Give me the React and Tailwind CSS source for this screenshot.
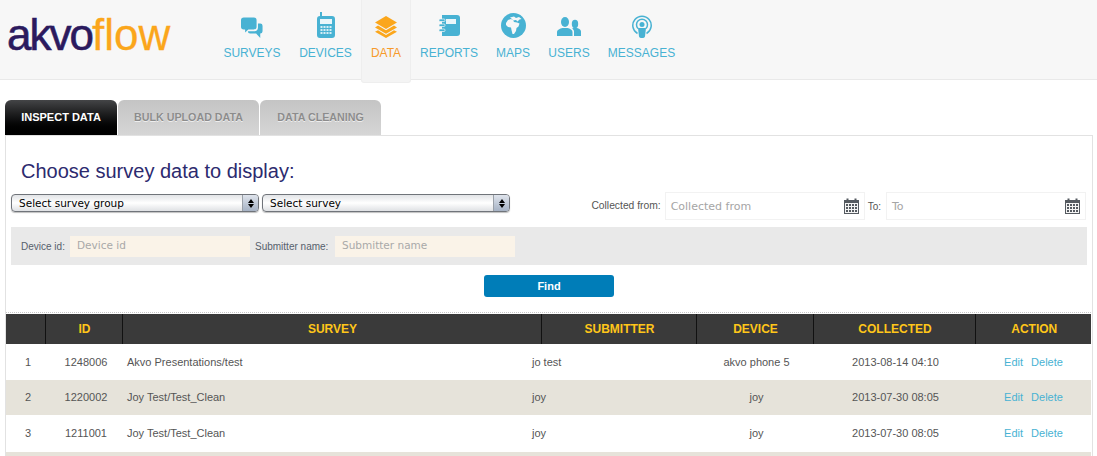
const Chat = () => (
  <svg width="22" height="24" viewBox="0 0 24 25" fill="#48b2d3">
    <path d="M3 1h11a3 3 0 0 1 3 3v7a3 3 0 0 1-3 3H8l-3.500 3.500V14H3a3 3 0 0 1-3-3V4a3 3 0 0 1 3-3z" />
    <path d="M18.500 7.500H21a2.500 2.500 0 0 1 2.500 2.500v6a2.500 2.500 0 0 1-2.500 2.500v5l-4.500-5H10a2.500 2.500 0 0 1-2.500-2.500h7a4 4 0 0 0 4-4z" />
  </svg>
);

const Device = () => (
  <svg width="18" height="26" viewBox="0 0 18 26">
    <path fill="#48b2d3" d="M3 0h2v4h10a3 3 0 0 1 3 3v16a3 3 0 0 1-3 3H3a3 3 0 0 1-3-3V7a3 3 0 0 1 3-3V0z" />
    <rect x="3" y="7" width="12" height="5" fill="#eaf6fa" />
    {[14, 17, 20].map((y) =>
      [3.500, 6.500, 9.500, 12.500].map((x) => (
        <rect key={`${x}-${y}`} x={x} y={y} width="2" height="2" fill="#d5edf5" />
      ))
    )}
  </svg>
);

const Layers = () => (
  <svg width="22" height="22" viewBox="0 0 22 22" fill="#fba61b">
    <path d="M11 0l11 6.500L11 13 0 6.500z" />
    <path d="M3 9.500l8 4.700 8-4.700 3 2-11 6.300L0 11.500z" />
    <path d="M3 14.200l8 4.700 8-4.700 3 1.600L11 22 0 15.800z" />
  </svg>
);

const Notebook = () => (
  <svg width="21" height="21" viewBox="0 0 21 21">
    <path fill="#48b2d3" d="M3 0h15a3 3 0 0 1 3 3v15a3 3 0 0 1-3 3H3z" />
    <rect x="7" y="4" width="10" height="5" fill="#eaf6fa" />
    <rect x="0" y="4" width="6" height="2.500" rx="1" fill="#48b2d3" stroke="#f7f7f7" strokeWidth="0.700" />
    <rect x="0" y="9" width="6" height="2.500" rx="1" fill="#48b2d3" stroke="#f7f7f7" strokeWidth="0.700" />
    <rect x="0" y="14" width="6" height="2.500" rx="1" fill="#48b2d3" stroke="#f7f7f7" strokeWidth="0.700" />
  </svg>
);

const Globe = () => (
  <svg width="25" height="25" viewBox="0 0 25 25">
    <circle cx="12.500" cy="12.500" r="12.500" fill="#48b2d3" />
    <path fill="#f7f7f7" d="M5 10l2-3 3-1 2 1 1 2 3 .5 2.500 1-1 3-2 1.500-.5 3-2 3h-1.500l-1-4-.5-2.500-3-.5L5 12z" />
    <path fill="#f7f7f7" d="M9 4.500l4-1 2 1.500 3-1 2.500 2-2 .5-2 2-1.500-1.500-3 .5-1-1.500z" />
  </svg>
);

const Users = () => (
  <svg width="24" height="20" viewBox="0 0 24 20" fill="#48b2d3">
    <ellipse cx="8" cy="5" rx="4" ry="5" />
    <path d="M0 19v-4c0-2 3-3.500 5.500-4h5c2.500.5 5 2 5 4v4z" />
    <ellipse cx="18" cy="7" rx="3.200" ry="4.200" />
    <path d="M17 19v-4.500c0-1.500-1-2.500-2-3l1.500-.5h3.500c2 .5 4 1.500 4 3.500V19z" />
  </svg>
);

const Podcast = () => (
  <svg width="20" height="23" viewBox="0 0 20 23" fill="none" stroke="#48b2d3">
    <path strokeWidth="1.500" d="M5.500 18.500a9.200 9.200 0 1 1 9 0" />
    <path strokeWidth="1.500" d="M6 13.500a5.500 5.500 0 1 1 8 0" />
    <circle cx="10" cy="9.500" r="2.500" fill="#48b2d3" stroke="none" />
    <path fill="#48b2d3" stroke="none" d="M6 13h8l-1 8.500a2 2 0 0 1-2 1.500H9a2 2 0 0 1-2-1.500z" />
  </svg>
);

const Calendar = () => (
  <svg width="15" height="16" viewBox="0 0 15 16" fill="#555a60" className="shrink-0">
    <path d="M0 2h2.500V0.500h2V2h6V0.500h2V2H15v14H0z" />
    <rect x="1" y="5" width="13" height="10" fill="#f4f4f4" />
    {[6, 9, 12].map((y) =>
      [2, 5, 8, 11].map((x) => (
        <rect key={`${x}-${y}`} x={x} y={y} width="2" height="2" />
      ))
    )}
  </svg>
);

const navItems = [
  { label: "SURVEYS", icon: <Chat />, cls: "w-[76px]", iconCls: "pt-[6px]" },
  { label: "DEVICES", icon: <Device />, cls: "w-[71px]", iconCls: "" },
  { label: "DATA", icon: <Layers />, active: true, cls: "w-[50px]", iconCls: "pt-[3px]" },
  { label: "REPORTS", icon: <Notebook />, cls: "w-[76px]", iconCls: "" },
  { label: "MAPS", icon: <Globe />, cls: "w-[52px]", iconCls: "" },
  { label: "USERS", icon: <Users />, cls: "w-[60px]", iconCls: "pt-[3px]" },
  { label: "MESSAGES", icon: <Podcast />, cls: "w-[85px]", iconCls: "pt-[3px]" },
];

const rows = [
  { n: 1, id: "1248006", survey: "Akvo Presentations/test", submitter: "jo test", device: "akvo phone 5", date: "2013-08-14 04:10", h: "h-[36px]", bg: "bg-white" },
  { n: 2, id: "1220002", survey: "Joy Test/Test_Clean", submitter: "joy", device: "joy", date: "2013-07-30 08:05", h: "h-[35px]", bg: "bg-[#e6e3da]" },
  { n: 3, id: "1211001", survey: "Joy Test/Test_Clean", submitter: "joy", device: "joy", date: "2013-07-30 08:05", h: "h-[37px]", bg: "bg-white" },
];

const columns = [
  { label: "", w: "w-[39px]" },
  { label: "ID", w: "w-[77px]" },
  { label: "SURVEY", w: "w-[419px]" },
  { label: "SUBMITTER", w: "w-[155px]" },
  { label: "DEVICE", w: "w-[117px]" },
  { label: "COLLECTED", w: "w-[162px]" },
  { label: "ACTION", w: "" },
];

const SelectBox = ({ label }) => (
  <div className="w-[248px] h-[18px] flex items-center rounded-[4px] border border-[#70747a] bg-gradient-to-b from-[#e2e4e7] via-[#ffffff] to-[#dfe1e4] overflow-hidden shadow-[0_1px_1px_rgba(0,0,0,0.25)]">
    <span className="flex-1 pl-[7px] pt-[1px] font-['DejaVu_Sans',sans-serif] text-[10.500px] text-black">{label}</span>
    <span className="w-[16px] h-full flex flex-col items-center justify-center gap-[1px] bg-gradient-to-b from-[#dfe4ec] to-[#a6b2c4] border-l border-[#9aa0a8]">
      <span className="w-0 h-0 border-x-[3px] border-x-transparent border-b-[4px] border-b-black" />
      <span className="w-0 h-0 border-x-[3px] border-x-transparent border-t-[4px] border-t-black" />
    </span>
  </div>
);

const DateInput = ({ label }) => (
  <div className="w-[200px] h-[28px] flex items-center justify-between pl-[5px] pr-[5px] border border-[#f2f2f2] font-['DejaVu_Sans',sans-serif] text-[11px] text-[#a5a5a5]">
    <span className="mt-[3px]">{label}</span>
    <Calendar />
  </div>
);

const App = () => {
  return (
    <div className="w-[1097px] h-[456px] overflow-hidden bg-white font-['Liberation_Sans',sans-serif]">
      {/* Header */}
      <header className="h-[80px] flex bg-[#f7f7f7] border-b border-[#e9e9e9]">
        <div className="w-[214px] pl-[7px] pt-[7px] text-[44px] leading-[56px]">
          <span className="text-[#2b1a5e] tracking-[-2px] [-webkit-text-stroke:0.6px_#2b1a5e]">akvo</span>
          <span className="text-[#fba61b] [-webkit-text-stroke:0.3px_#fba61b]">flow</span>
        </div>
        <nav className="flex items-start">
          {navItems.map((item) => (
            <div
              key={item.label}
              className={`${item.cls} flex flex-col items-center ${
                item.active
                  ? "h-[83px] bg-[#f4f4f4] border-x border-b border-[#eeeeee] rounded-b-[3px] relative"
                  : "h-[79px]"
              }`}
            >
              <div className={`h-[26px] mt-[12px] flex items-center justify-center ${item.iconCls}`}>{item.icon}</div>
              <span className={`mt-[8px] text-[12px] leading-[14px] ${item.active ? "text-[#f79a2a]" : "text-[#48b2d3]"}`}>
                {item.label}
              </span>
            </div>
          ))}
        </nav>
      </header>

      {/* Tabs */}
      <div className="mt-[20px] ml-[5px] flex gap-[1px] h-[35px]">
        <div className="w-[112px] flex items-center justify-center rounded-t-[6px] bg-gradient-to-b from-[#444547] to-[#000000] text-[11px] font-bold text-white">
          INSPECT DATA
        </div>
        <div className="w-[141px] flex items-center justify-center rounded-t-[6px] bg-gradient-to-b from-[#c4c4c4] to-[#d6d6d6] text-[10.700px] font-bold text-[#8c8c8c] [text-shadow:0_1px_0_#eeeeee]">
          BULK UPLOAD DATA
        </div>
        <div className="w-[121px] flex items-center justify-center rounded-t-[6px] bg-gradient-to-b from-[#c4c4c4] to-[#d6d6d6] text-[10.700px] font-bold text-[#8c8c8c] [text-shadow:0_1px_0_#eeeeee]">
          DATA CLEANING
        </div>
      </div>

      {/* Panel */}
      <main className="ml-[5px] w-[1088px] h-[321px] border-l border-t border-r border-[#e2e2e2]">
        <h1 className="pl-[15px] pt-[23px] text-[20px] leading-[24px] text-[#2c2a6e]">Choose survey data to display:</h1>

        <div className="pl-[5px] pr-[6px] mt-[9px] h-[28px] flex items-start">
          <div className="flex gap-[3px] mt-[2px]">
            <SelectBox label="Select survey group" />
            <SelectBox label="Select survey" />
          </div>
          <div className="ml-auto flex items-center h-[28px]">
            <span className="text-[10.300px] text-[#555555] mr-[4px]">Collected from:</span>
            <DateInput label="Collected from" />
            <span className="ml-[3px] mr-[5px] text-[10px] text-[#555555]">To:</span>
            <DateInput label="To" />
          </div>
        </div>

        <div className="mx-[5px] mt-[7px] h-[38px] bg-[#e9e9e9] flex items-center pl-[10px] text-[10px] text-[#56606c]">
          <span className="w-[49px]">Device id:</span>
          <div className="w-[180px] h-[21px] flex items-center pl-[7px] bg-[#faf3e8] font-['DejaVu_Sans',sans-serif] text-[10.500px] text-[#a9a9a9]">Device id</div>
          <span className="ml-[5px] w-[80px]">Submitter name:</span>
          <div className="w-[180px] h-[21px] flex items-center pl-[7px] bg-[#faf3e8] font-['DejaVu_Sans',sans-serif] text-[10.500px] text-[#a9a9a9]">Submitter name</div>
        </div>

        <div className="mt-[10px] flex justify-center">
          <button className="w-[130px] h-[22px] rounded-[3px] bg-[#007db8] text-[11px] font-bold text-white">Find</button>
        </div>

        <div className="mt-[15px] w-[1085px] border-t border-dotted border-[#c8c8c8]" />

        {/* Table */}
        <table className="mt-[1px] w-[1085px] table-fixed border-collapse text-[11px] text-[#555555]">
          <thead>
            <tr className="h-[30px] bg-[#3a3a3a]">
              {columns.map((col, i) => (
                <th
                  key={i}
                  className={`${col.w} p-0 pl-[2px] text-center text-[12px] font-bold text-[#ffc619] ${i < 6 ? "border-r border-[#111111]" : ""}`}
                >
                  {col.label}
                </th>
              ))}
            </tr>
          </thead>
          <tbody>
            {rows.map((row) => (
              <tr key={row.n} className={`${row.h} ${row.bg}`}>
                <td className="p-0 pl-[5px] text-center">{row.n}</td>
                <td className="p-0 pl-[5px] text-center">{row.id}</td>
                <td className="p-0 pl-[5px]">{row.survey}</td>
                <td className="p-0">
                  {/* submitter text sits left of its header column in the original */}
                  <span className="block -ml-[9px]">{row.submitter}</span>
                </td>
                <td className="p-0 pl-[4px] text-center">{row.device}</td>
                <td className="p-0 pl-[3px] text-center">{row.date}</td>
                <td className="p-0 pl-[1px] text-center text-[#48b2d3]">
                  <span className="mr-[8px]">Edit</span>
                  <span>Delete</span>
                </td>
              </tr>
            ))}
            <tr className="h-[8px] bg-[#e6e3da]">
              <td colSpan={7} />
            </tr>
          </tbody>
        </table>
      </main>
    </div>
  );
};

export default App;
